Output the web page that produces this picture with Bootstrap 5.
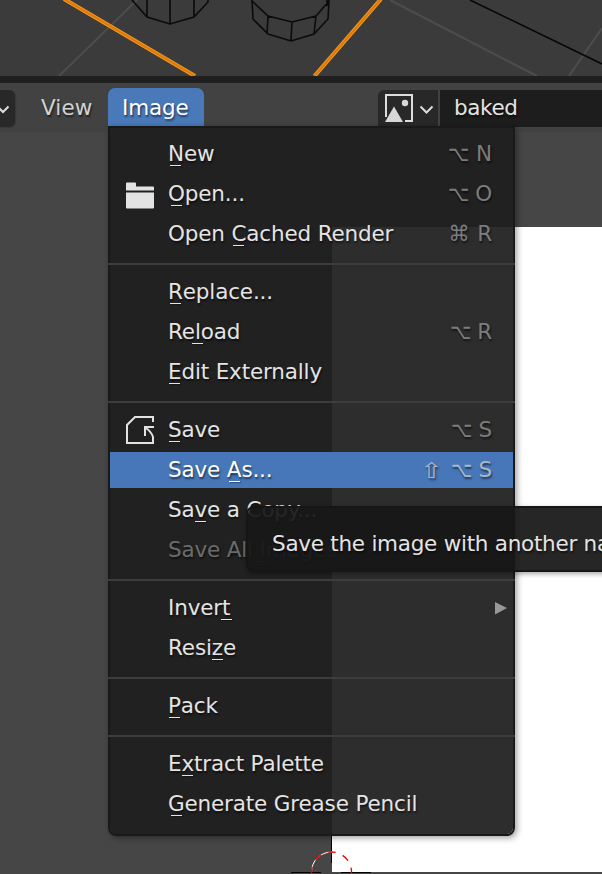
<!DOCTYPE html>
<html lang="en">
<head>
<meta charset="utf-8">
<meta name="viewport" content="width=device-width, initial-scale=1">
<title>Image editor</title>
<link href="https://cdn.jsdelivr.net/npm/bootstrap@5.3.0/dist/css/bootstrap.min.css" rel="stylesheet">
<style>
html,body{height:100%;overflow:hidden}
body{background:#464646;font-family:"DejaVu Sans",sans-serif;font-size:21.5px;line-height:40px;letter-spacing:-.16px;color:#e4e4e4;text-shadow:1px 2px 2px rgba(0,0,0,.55)}
.app{height:874px;width:602px}
.viewport3d{height:76px;background:#3b3b3b}
.divider{height:7px;background:#1f1f1f}
.toolbar{height:49px;background:#424242;padding-top:5px}
.mode-box{width:15px;height:37px;margin-top:2px;background:#282828;border-radius:0 6px 6px 0;box-shadow:1px 1px 1px #383838}
.view-btn{width:93px;padding-left:26px;color:#d2d2d2;letter-spacing:.1px}
.image-btn{width:96px;height:38px;background:#4a79b9;border-radius:7px 7px 0 0;color:#fff;padding-left:14px}
.toolbar .view-btn,.toolbar .image-btn{line-height:40px}
.picker{width:60px;height:37px;margin:2px 2px 0 174px;background:#282828;border-radius:6px 0 0 0}
.name-field{height:37px;margin-top:2px;background:#1d1d1d;padding-left:14px;line-height:36px;letter-spacing:-.35px}
.canvas-area{height:742px}
.menu-panel{left:108px;top:126px;width:407px;height:710px;background:rgba(31,31,31,.936);background-clip:padding-box;border:2px solid #191919;border-radius:0 0 8px 8px;padding:6px 0 0;box-shadow:2px 2px 6px rgba(0,0,0,.38)}
.entry{height:40px;padding:0 21px 0 15px}
.entry.has-submenu{padding-right:5px}
.entry-icon{width:43px;height:40px;flex:none}
.entry-icon svg{display:block}
.keys{color:#7c7c7c;word-spacing:1px}
.alt-key{display:inline-block;width:20px;line-height:1;transform:scaleX(.86);transform-origin:0 50%}
.shift-key{display:inline-block;line-height:1;transform:translate(-3px,1px) scaleX(1.2)}
.entry.active-entry{height:36px;margin:2px 0;background:#4777b8;color:#fff;line-height:36px}
.active-entry .keys{color:#a9b6c9}
.active-entry .entry-icon{height:36px}
.faded{color:#6b6b6b}
.rule{height:18px;padding-top:9px;margin:0 -2px}
.rule::after{content:"";display:block;height:2px;background:#3d3d3d}
.hot{position:relative}
.hot::after{content:"";position:absolute;left:50%;bottom:0;width:11px;height:1.5px;margin-left:-5.5px;background:currentColor;box-shadow:1px 1px 1px rgba(0,0,0,.4)}
.tip{left:246px;top:506px;width:370px;height:66px;background:rgba(23,23,23,.938);background-clip:padding-box;border:2px solid #161616;border-radius:8px;padding-left:24px;line-height:71px;letter-spacing:-.26px;box-shadow:1px 2px 5px rgba(0,0,0,.35);white-space:nowrap}
</style>
<script src="https://cdn.jsdelivr.net/npm/bootstrap@5.3.0/dist/js/bootstrap.bundle.min.js"></script>
</head>
<body>
<div class="app position-relative overflow-hidden d-flex flex-column">
  <div class="viewport3d">
    <svg class="d-block" width="602" height="76" fill="none">
      <path d="M137 0L59 76M390 0L537 76M602 28L569 76" stroke="#4d4d4d" stroke-width="2"/>
      <path d="M470 0L602 64" stroke="#080808" stroke-width="1.6"/>
      <path d="M132 0L147 17L170 24L194 17L208 2V0M147 0V17M170 0V24M194 0V17M252 0L253 19L268 34L291 41L314 34L328 19L329 0M252 1L268 16L292 22L316 16L329 1M268 16L267 34M292 22L291 40M316 16L314 34M327 0V6" stroke="#0b0b0b" stroke-width="1.6"/>
      <path d="M64 -1L195 76M381 -1L314.500 76" stroke="#fd9a22" stroke-width="4"/>
      <path d="M64 -1L195 76M381 -1L314.500 76" stroke="#dc7b06" stroke-width="2.200"/>
    </svg>
  </div>
  <div class="divider"></div>
  <nav class="toolbar d-flex align-items-start">
    <div class="mode-box"><svg class="d-block" width="15" height="37" fill="none"><path d="M-3 16L3 22L8.500 16.500" stroke="#ddd" stroke-width="2"/></svg></div>
    <div class="view-btn">View</div>
    <div class="image-btn">Image</div>
    <div class="picker"><svg class="d-block" width="60" height="37" fill="none">
      <path d="M8 27V5H34V31H27" stroke="#dcdcdc" stroke-width="2"/>
      <path d="M7 32L16 16.500L25 32Z" fill="#d8d8d8"/><circle cx="27" cy="13" r="3.200" fill="#d8d8d8"/>
      <path d="M42.500 16.500L48.500 22.500L54.500 16.500" stroke="#dcdcdc" stroke-width="2"/></svg></div>
    <div class="name-field flex-grow-1">baked</div>
  </nav>
  <div class="canvas-area">
    <svg class="d-block" width="602" height="742" fill="none">
      <rect x="332" y="95" width="270" height="645" fill="#fff"/>
      <path d="M331.500 700V731M291 740.500H321M341 740.500H371" stroke="#000"/>
      <path d="M311.500 742V740A20 20 0 0 1 351.500 740V742" stroke="#fff"/>
      <path d="M311.500 742V740A20 20 0 0 1 351.500 740V742" stroke="#f00000" stroke-width="1.300" stroke-dasharray="7.500 7.500"/>
    </svg>
  </div>

  <div class="menu-panel position-absolute">
    <div class="entry d-flex"><span class="entry-icon"></span><span><span class="hot">N</span>ew</span><span class="keys ms-auto"><span class="alt-key">⌥</span> N</span></div>
    <div class="entry d-flex"><span class="entry-icon"><svg width="30" height="40" fill="#e3e3e3"><path d="M1 9.500q0-1 1-1h8q1 0 1 1v3h17q1 0 1 1v3H1zM1 18.500h28v15q0 1-1 1H2q-1 0-1-1z"/></svg></span><span><span class="hot">O</span>pen...</span><span class="keys ms-auto"><span class="alt-key">⌥</span> O</span></div>
    <div class="entry d-flex"><span class="entry-icon"></span><span>Open <span class="hot">C</span>ached Render</span><span class="keys ms-auto">⌘ R</span></div>
    <div class="rule"></div>
    <div class="entry d-flex"><span class="entry-icon"></span><span><span class="hot">R</span>eplace...</span></div>
    <div class="entry d-flex"><span class="entry-icon"></span><span>Re<span class="hot">l</span>oad</span><span class="keys ms-auto"><span class="alt-key">⌥</span> R</span></div>
    <div class="entry d-flex"><span class="entry-icon"></span><span><span class="hot">E</span>dit Externally</span></div>
    <div class="rule"></div>
    <div class="entry d-flex"><span class="entry-icon"><svg width="30" height="40" fill="none" stroke="#e3e3e3" stroke-width="2"><path d="M28 12V7H10L2 15V33H28V27Q26 21 20 17.500M29 17H20V26"/></svg></span><span><span class="hot">S</span>ave</span><span class="keys ms-auto"><span class="alt-key">⌥</span> S</span></div>
    <div class="entry active-entry d-flex"><span class="entry-icon"></span><span>Save <span class="hot">A</span>s...</span><span class="keys ms-auto"><span class="shift-key">⇧</span> <span class="alt-key">⌥</span> S</span></div>
    <div class="entry d-flex"><span class="entry-icon"></span><span>Sa<span class="hot">v</span>e a Copy...</span></div>
    <div class="entry faded d-flex"><span class="entry-icon"></span><span>Save All <span class="hot">I</span>mages</span></div>
    <div class="rule"></div>
    <div class="entry has-submenu d-flex"><span class="entry-icon"></span><span>Inver<span class="hot">t</span></span><svg class="ms-auto" width="13" height="40"><path d="M0 14L12 20L0 26.500Z" fill="#999"/></svg></div>
    <div class="entry d-flex"><span class="entry-icon"></span><span>Resi<span class="hot">z</span>e</span></div>
    <div class="rule"></div>
    <div class="entry d-flex"><span class="entry-icon"></span><span><span class="hot">P</span>ack</span></div>
    <div class="rule"></div>
    <div class="entry d-flex"><span class="entry-icon"></span><span>E<span class="hot">x</span>tract Palette</span></div>
    <div class="entry d-flex"><span class="entry-icon"></span><span><span class="hot">G</span>enerate Grease Pencil</span></div>
  </div>
  <div class="tip position-absolute">Save the image with another name</div>
</div>
</body>
</html>
